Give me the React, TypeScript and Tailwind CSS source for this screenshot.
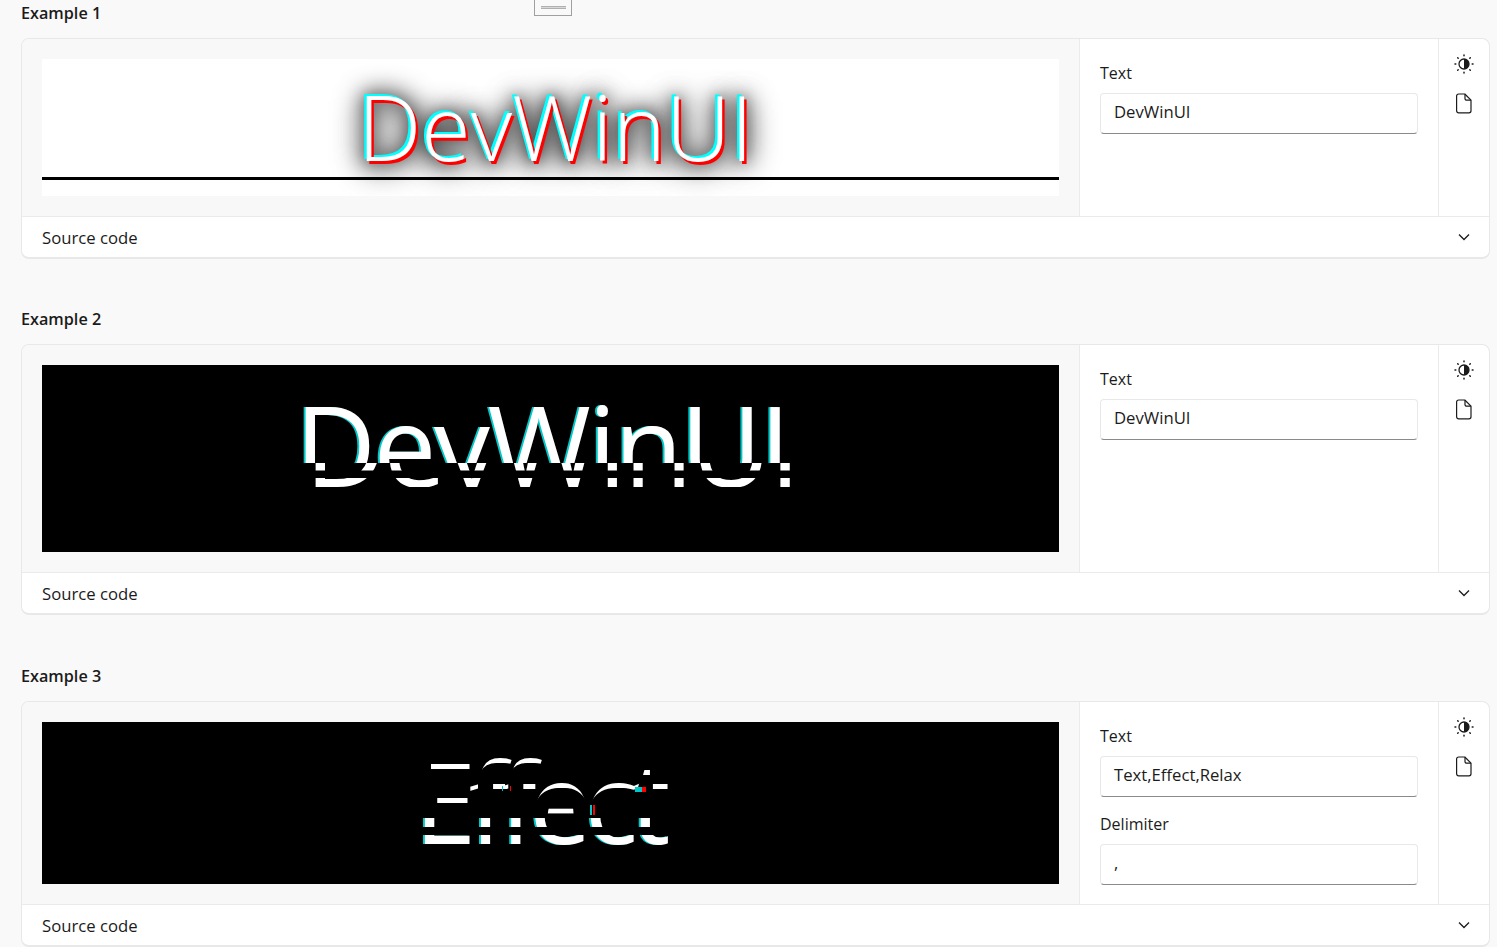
import React from 'react';

const font = "font-['Open_Sans','Noto_Sans',sans-serif]";

const SunIcon = () => (
  <svg width="22" height="22" viewBox="0 0 22 22" fill="none">
    <circle cx="11" cy="11" r="5" stroke="#1b1b1b" strokeWidth="1.3" />
    <path d="M11 6a5 5 0 0 1 0 10z" fill="#1b1b1b" />
    <g stroke="#1b1b1b" strokeWidth="1.5" strokeLinecap="round">
      <path d="M11 2v.8M11 19.2v.8M2 11h.8M19.2 11h.8M4.7 4.7l.5.5M16.8 16.8l.5.5M4.7 17.3l.5-.5M16.8 5.2l.5-.5" />
    </g>
  </svg>
);

const DocIcon = () => (
  <svg width="16" height="21" viewBox="0 0 16 21" fill="none" stroke="#1b1b1b" strokeWidth="1.2" strokeLinejoin="round">
    <path d="M2.6 1h6.2L15 7.2v10.6a2 2 0 0 1-2 2H2.6a2 2 0 0 1-2-2V3a2 2 0 0 1 2-2z" />
    <path d="M9 1.2v4.3a1.7 1.7 0 0 0 1.7 1.7H15" />
  </svg>
);

const Chevron = () => (
  <svg width="12" height="8" viewBox="0 0 12 8" fill="none" stroke="#1b1b1b" strokeWidth="1.3">
    <path d="M1 1.5l5 5 5-5" />
  </svg>
);

// red and cyan specks left behind by the glitch effect
const GlitchSpecks = () => (
  <svg className="absolute inset-0" width="1017" height="162" viewBox="0 0 1017 162">
    <rect x="460" y="64" width="1" height="5" fill="#00c8c8" />
    <rect x="468" y="64" width="1" height="5" fill="#ff0000" />
    <rect x="593" y="65" width="7" height="5" fill="#00c8c8" />
    <rect x="600" y="65" width="4" height="5" fill="#ff0000" />
    <rect x="548" y="83" width="2" height="10" fill="#00c8c8" />
    <rect x="551" y="83" width="2" height="10" fill="#ff0000" />
  </svg>
);

const Field = ({ label, value }: { label: string; value: string }) => (
  <div>
    <div className="h-[28px] mb-[6px] flex items-center text-[16px] text-[#1b1b1b]">{label}</div>
    <div className="h-[41px] rounded-[4px] border border-[#e8e8e8] border-b-[#8a8a8a] bg-white px-[13px] pb-[3px] flex items-center text-[16.7px] text-[#1b1b1b]">
      {value}
    </div>
  </div>
);

const bigText = "absolute inset-0 flex items-center justify-center leading-none whitespace-nowrap";
const big2 = `${bigText} text-[112px] font-normal tracking-[-2.5px] text-white`;
const big3 = `${bigText} text-[112px] font-normal tracking-[-7.5px]`;

const Example = ({
  title,
  className,
  previewClass,
  fields,
  children,
}: {
  title: string;
  className: string;
  previewClass: string;
  fields: { label: string; value: string }[];
  children: React.ReactNode;
}) => (
  <section className={className}>
    <h2 className="h-[26px] flex items-center text-[16.2px] font-semibold text-[#1b1b1b] mb-[12px]">{title}</h2>
    <div className="rounded-[8px] border border-[#e8e8e8] border-b-2 bg-white overflow-hidden">
      <div className="flex">
        <div className="w-[1058px] p-[20px] bg-[#f8f8f8] border-r border-[#ebebeb]">
          <div className={previewClass}>{children}</div>
        </div>
        <div className="w-[359px] border-r border-[#ebebeb] px-[20px] pt-[20px] flex flex-col gap-[13px]">
          {fields.map((f) => (
            <Field key={f.label} label={f.label} value={f.value} />
          ))}
        </div>
        <div className="flex-1 flex flex-col items-center pt-[14px] gap-[18px]">
          <SunIcon />
          <DocIcon />
        </div>
      </div>
      <div className="h-[41px] border-t border-[#ebebeb] pl-[20px] pr-[19px] flex items-center justify-between text-[16.7px] text-[#1b1b1b]">
        <span className="pt-[2px]">Source code</span>
        <Chevron />
      </div>
    </div>
  </section>
);

export default function App() {
  return (
    <div className={`${font} relative h-[947px] overflow-hidden bg-[#f9f9f9] pl-[21px] pr-[7px]`}>
      <div className="absolute left-[534px] top-[-1px] w-[38px] h-[17px] border border-[#a0a0a0] bg-[#f9f9f9] flex items-center justify-center">
        <div className="w-[25px] h-[3px] border-y border-[#b0b0b0] bg-[#d8d8d8]" />
      </div>

      <Example
        title="Example 1"
        className=""
        previewClass="relative h-[137px] bg-white overflow-hidden"
        fields={[{ label: 'Text', value: 'DevWinUI' }]}
      >
        <div className={`${bigText} text-[90px] font-light text-white translate-x-[5px] translate-y-[-2px] [text-shadow:2.5px_2.5px_0_#ff0000,-2.5px_-2.5px_0_#00ffff,0_0_12px_#00000066,0_0_20px_#000,0_2px_28px_#000,0_4px_32px_#000]`}>DevWinUI</div>
        <div className="absolute left-0 right-0 top-[118px] h-[3px] bg-black" />
      </Example>

      <Example
        title="Example 2"
        className="mt-[47px]"
        previewClass="relative h-[187px] bg-black overflow-hidden"
        fields={[{ label: 'Text', value: 'DevWinUI' }]}
      >
        <div className="absolute inset-0 [clip-path:inset(0_0_89px_0)]">
          <div className={`${big2} translate-x-[-9px] translate-y-[-15px] [text-shadow:-2px_0_0_#00c8c8]`}>DevWinUI</div>
        </div>
        <div className="absolute inset-0 [clip-path:inset(98px_0_81.5px_0)]">
          <div className={`${big2} translate-x-[1px] translate-y-[-15px]`}>DevWinUI</div>
        </div>
        <div className="absolute inset-0 [clip-path:inset(113px_0_65px_0)]">
          <div className={`${big2} translate-x-[1px] translate-y-[-15px]`}>DevWinUI</div>
        </div>
      </Example>

      <Example
        title="Example 3"
        className="mt-[48px]"
        previewClass="relative h-[162px] bg-black overflow-hidden"
        fields={[
          { label: 'Text', value: 'Text,Effect,Relax' },
          { label: 'Delimiter', value: ',' },
        ]}
      >
        <div className="absolute inset-0 [clip-path:inset(0_0_66px_389px)]">
          <div className={`${big3} text-white translate-x-[-12px] translate-y-[-2px]`}>Effect</div>
          <div className={`${big3} text-black translate-x-[-12px] translate-y-[3px] [text-shadow:3px_0_0_#000,-3px_0_0_#000]`}>Effect</div>
        </div>
        <div className="absolute inset-0 [clip-path:inset(96px_0_57px_0)]">
          <div className={`${big3} text-white translate-x-[-12px] translate-y-[-2px] [text-shadow:-2px_0_0_#00c8c8]`}>Effect</div>
        </div>
        <div className="absolute inset-0 [clip-path:inset(113px_0_38px_0)]">
          <div className={`${big3} text-white translate-x-[-12px] translate-y-[-2px] [text-shadow:-2px_0_0_#00c8c8]`}>Effect</div>
        </div>
        <GlitchSpecks />
      </Example>
    </div>
  );
}
